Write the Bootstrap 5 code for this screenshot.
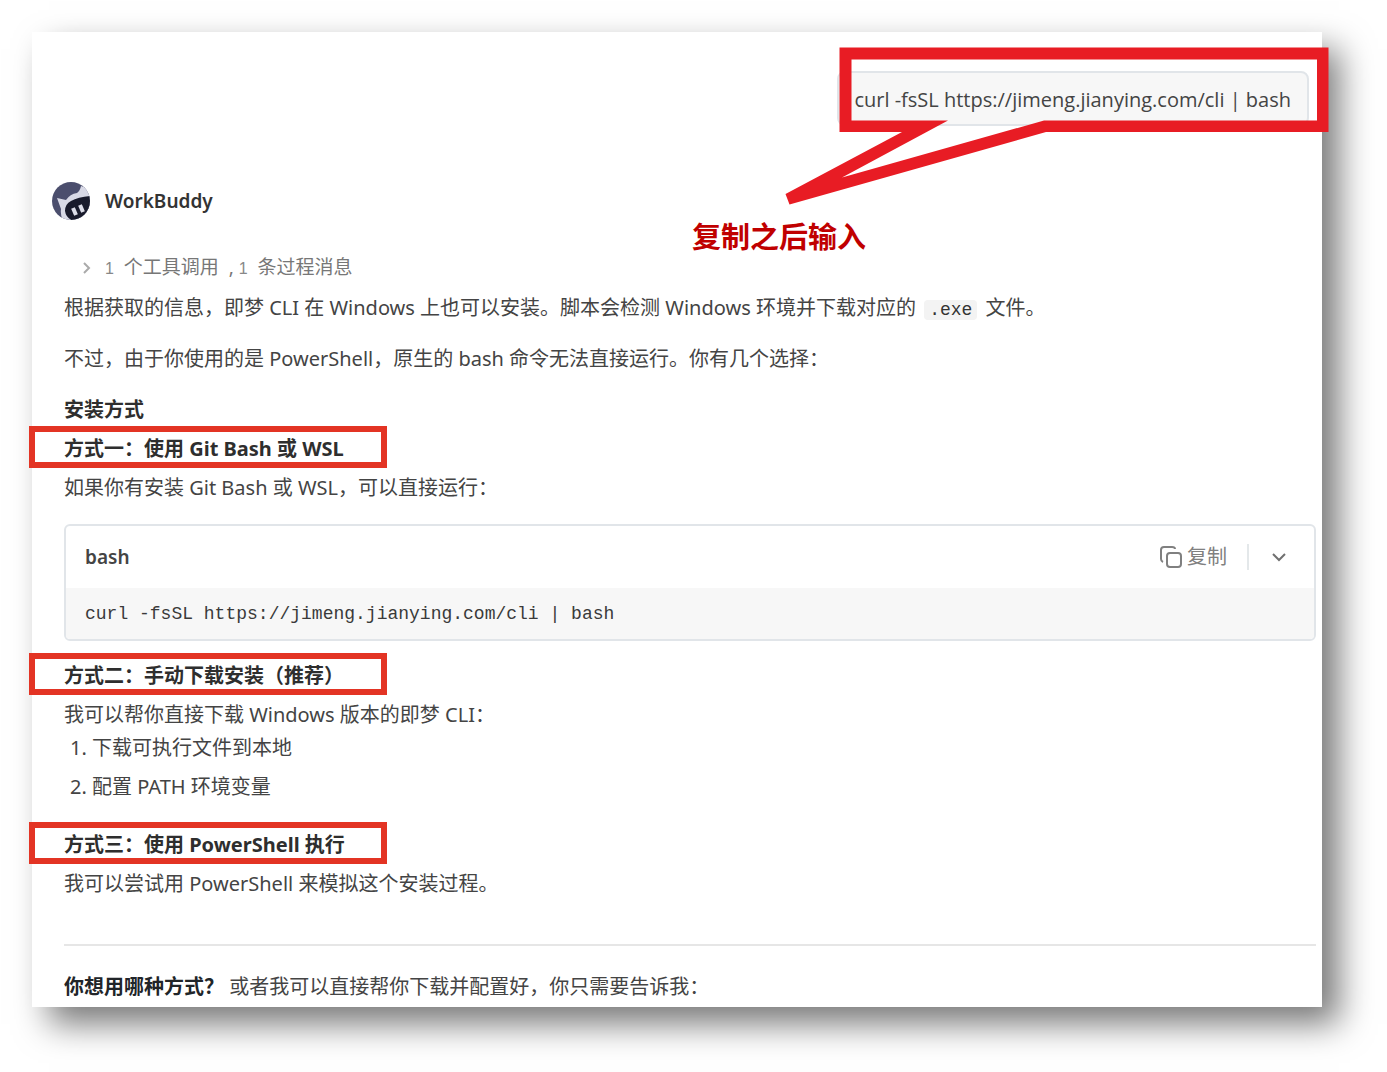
<!DOCTYPE html>
<html lang="zh-CN">
<head>
<meta charset="utf-8">
<meta name="viewport" content="width=device-width, initial-scale=1">
<title>WorkBuddy</title>
<link href="https://cdn.jsdelivr.net/npm/bootstrap@5.3.0/dist/css/bootstrap.min.css" rel="stylesheet">
<style>
  body { font-family: "Noto Sans", "Noto Sans CJK SC", sans-serif; font-size: 20px; line-height: 30px; color: #444; background: #fff; }
  .sheet { margin: 32px 65px 65px 32px; padding: 39px 6px 5px 20px; background: #fff; box-shadow: 17px 17px 32px rgba(0, 0, 0, .53); }
  .bubble { margin-right: 7px; padding: 12px 16px 9px 15px; border: 2px solid #e1e5e9; border-radius: 8px; background: #f7f7f7; }
  .bubble-text { font-family: "Open Sans", "Noto Sans CJK SC", sans-serif; }
  .callout { right: -22px; top: -26px; width: 544px; height: 160px; pointer-events: none; }
  .callout-label { right: 450px; top: 148px; font-size: 29px; line-height: 36px; font-weight: 700; color: #c00000; }
  .agent { margin-top: 56px; gap: 15px; font-size: 19px; color: #333; font-weight: 600; }
  .reply { padding-left: 12px; }
  .tool-call { margin-top: 32px; margin-bottom: 9px; padding-left: 17px; gap: 13px; font-size: 19px; color: #777; text-decoration: none; }
  .tool-call .count { font-size: 16px; font-family: "Liberation Sans", sans-serif; color: #888; }
  .reply p { margin-bottom: 9px; }
  .reply p.loose { margin-bottom: 21px; }
  .reply h2, .reply h3 { margin-bottom: 9px; font-size: 20px; line-height: 30px; font-weight: 700; color: #2e2e2e; }
  .frame { left: -35px; top: -8px; width: 358px; height: 42px; border: 6px solid #e33424; pointer-events: none; }
  .reply code { margin: 0 3px; padding: 0 5px; border-radius: 4px; background: #f3f3f3; color: #333; font-family: "Liberation Mono", monospace; font-size: 18px; line-height: 18px; }
  .codebox { margin: 21px 0 20px; border: 2px solid #e1e5e9; border-radius: 6px; overflow: hidden; }
  .codebox header { padding: 16px 25px 16px 19px; }
  .codebox strong { font-size: 19px; }
  .codebox pre { margin: 0; padding: 11px 19px 10px; background: #f7f7f7; color: #3a3a3a; font-family: "Liberation Mono", monospace; font-size: 18px; line-height: 30px; }
  .tool-btn { padding: 0; border: 0; background: none; color: #808080; line-height: 30px; }
  .divider-v { width: 2px; height: 26px; margin: 0 16px 0 20px; background: #e4e8ea; }
  .reply ol { margin: -6px 0 28px; padding-left: 28px; }
  .reply li { margin-bottom: 9px; }
  .reply hr { margin: 45px 0 26px; border-top: 2px solid #e6e6e6; opacity: 1; }
</style>
</head>
<body>
<main class="sheet">
  <div class="d-flex justify-content-end position-relative">
    <div class="bubble position-relative">
      <span class="bubble-text">curl -fsSL https://jimeng.jianying.com/cli | bash</span>
      <svg class="callout position-absolute" viewBox="785 47 544 160" aria-hidden="true">
        <path fill="#e81c24" fill-rule="evenodd" d="M839.500 47.500H1328.500V132H1046L789.500 204.500L785.500 194L902 132H839.500ZM851.500 59.500V120.500H948L842 177.500L1044 120.500H1317V59.500Z"/>
      </svg>
    </div>
    <div class="callout-label position-absolute text-nowrap">复制之后输入</div>
  </div>

  <div class="agent d-flex align-items-center">
    <svg width="38" height="38" viewBox="0 0 38 38" aria-hidden="true">
      <clipPath id="face"><circle cx="19" cy="19" r="19"/></clipPath>
      <g clip-path="url(#face)">
        <path fill="#4b4e6d" d="M0 0H38V38H0Z"/>
        <path fill="#d8d9e6" d="M5 16L14 18Q18 12 25 11Q28 9 29 4L40 8V40H12Q8 34 9 27Z"/>
        <path fill="#191b2c" d="M19 19Q26 15 38 14Q41 24 36 34L24 40Q14 37 13 29Q13 22 19 19Z"/>
        <path fill="none" stroke="#dcdde8" stroke-width="4" d="M21 26L24 33M28 23L31 30"/>
      </g>
    </svg>
    <span>WorkBuddy</span>
  </div>

  <div class="reply">
    <a href="#" class="tool-call d-flex align-items-center">
      <svg width="11" height="14" viewBox="0 0 11 14" fill="none" stroke="#aaa" stroke-width="2" aria-hidden="true"><path d="M3 2L8 7L3 12"/></svg>
      <span><span class="count">1</span>&nbsp; 个工具调用&nbsp; , <span class="count">1</span>&nbsp; 条过程消息</span>
    </a>
    <p class="loose">根据获取的信息，即梦 CLI 在 Windows 上也可以安装。脚本会检测 Windows 环境并下载对应的 <code>.exe</code> 文件。</p>
    <p class="loose">不过，由于你使用的是 PowerShell，原生的 bash 命令无法直接运行。你有几个选择：</p>
    <h2>安装方式</h2>
    <h3 class="position-relative">方式一：使用 Git Bash 或 WSL<span class="frame position-absolute"></span></h3>
    <p>如果你有安装 Git Bash 或 WSL，可以直接运行：</p>

    <section class="codebox">
      <header class="d-flex align-items-center justify-content-between">
        <strong class="fw-semibold">bash</strong>
        <div class="d-flex align-items-center">
          <button type="button" class="tool-btn d-flex align-items-center gap-1">
            <svg width="24" height="24" viewBox="0 0 24 24" fill="none" stroke="#808080" stroke-width="2" aria-hidden="true"><rect x="8" y="8" width="14" height="14" rx="3"/><path d="M4 17Q2 16 2 14V5Q2 2 5 2H13Q16 2 16 4"/></svg>
            复制
          </button>
          <span class="divider-v"></span>
          <button type="button" class="tool-btn ms-1" aria-label="折叠">
            <svg class="d-block" width="20" height="14" viewBox="0 0 20 14" fill="none" stroke="#707070" stroke-width="2" aria-hidden="true"><path d="M4 4L10 10L16 4"/></svg>
          </button>
        </div>
      </header>
      <pre>curl -fsSL https://jimeng.jianying.com/cli | bash</pre>
    </section>

    <h3 class="position-relative">方式二：手动下载安装（推荐）<span class="frame position-absolute"></span></h3>
    <p>我可以帮你直接下载 Windows 版本的即梦 CLI：</p>
    <ol>
      <li>下载可执行文件到本地</li>
      <li>配置 PATH 环境变量</li>
    </ol>
    <h3 class="position-relative">方式三：使用 PowerShell 执行<span class="frame position-absolute"></span></h3>
    <p>我可以尝试用 PowerShell 来模拟这个安装过程。</p>
    <hr>
    <div><strong class="text-dark">你想用哪种方式？</strong> 或者我可以直接帮你下载并配置好，你只需要告诉我：</div>
  </div>
</main>
<script src="https://cdn.jsdelivr.net/npm/bootstrap@5.3.0/dist/js/bootstrap.bundle.min.js"></script>
</body>
</html>
